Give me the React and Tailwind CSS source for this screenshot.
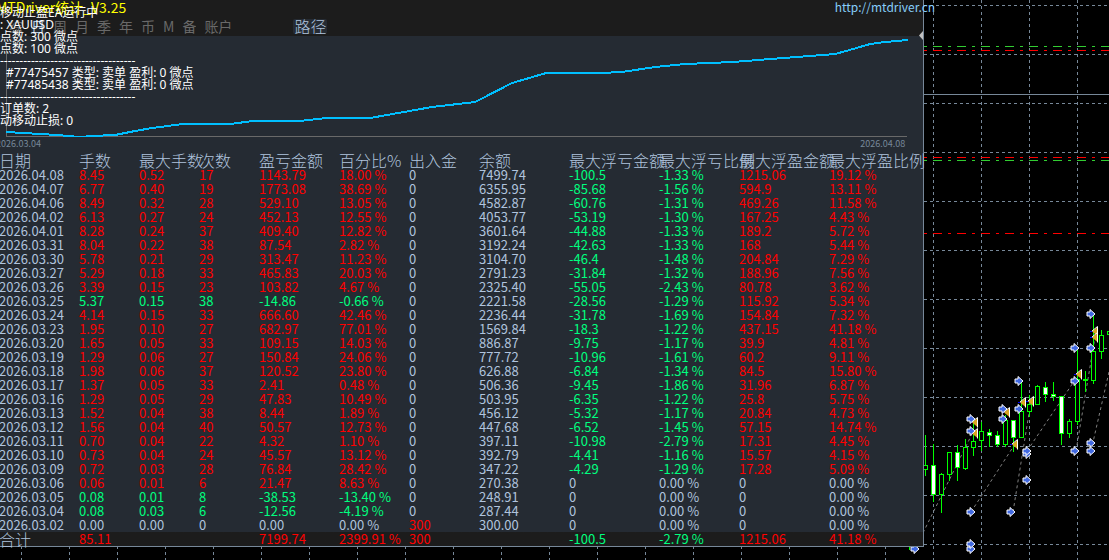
const COLUMNS = [
  { label: '日期', width: 'w-[80px]' },
  { label: '手数', width: 'w-[60px]' },
  { label: '最大手数', width: 'w-[60px]' },
  { label: '次数', width: 'w-[60px]' },
  { label: '盈亏金额', width: 'w-[80px]' },
  { label: '百分比%', width: 'w-[70px]' },
  { label: '出入金', width: 'w-[70px]' },
  { label: '余额', width: 'w-[90px]' },
  { label: '最大浮亏金额', width: 'w-[90px]' },
  { label: '最大浮亏比例', width: 'w-[80px]' },
  { label: '最大浮盈金额', width: 'w-[90px]' },
  { label: '最大浮盈比例', width: '' },
];

// date, lots, max lots, trades, profit, profit %, deposit, balance, max dd, max dd %, max float, max float %
const ROWS = [
  ['2026.04.08', '8.45', '0.52', '17', '1143.79', '18.00', '0', '7499.74', '-100.5', '-1.33', '1215.06', '19.12'],
  ['2026.04.07', '6.77', '0.40', '19', '1773.08', '38.69', '0', '6355.95', '-85.68', '-1.56', '594.9', '13.11'],
  ['2026.04.06', '8.49', '0.32', '28', '529.10', '13.05', '0', '4582.87', '-60.76', '-1.31', '469.26', '11.58'],
  ['2026.04.02', '6.13', '0.27', '24', '452.13', '12.55', '0', '4053.77', '-53.19', '-1.30', '167.25', '4.43'],
  ['2026.04.01', '8.28', '0.24', '37', '409.40', '12.82', '0', '3601.64', '-44.88', '-1.33', '189.2', '5.72'],
  ['2026.03.31', '8.04', '0.22', '38', '87.54', '2.82', '0', '3192.24', '-42.63', '-1.33', '168', '5.44'],
  ['2026.03.30', '5.78', '0.21', '29', '313.47', '11.23', '0', '3104.70', '-46.4', '-1.48', '204.84', '7.29'],
  ['2026.03.27', '5.29', '0.18', '33', '465.83', '20.03', '0', '2791.23', '-31.84', '-1.32', '188.96', '7.56'],
  ['2026.03.26', '3.39', '0.15', '23', '103.82', '4.67', '0', '2325.40', '-55.05', '-2.43', '80.78', '3.62'],
  ['2026.03.25', '5.37', '0.15', '38', '-14.86', '-0.66', '0', '2221.58', '-28.56', '-1.29', '115.92', '5.34'],
  ['2026.03.24', '4.14', '0.15', '33', '666.60', '42.46', '0', '2236.44', '-31.78', '-1.69', '154.84', '7.32'],
  ['2026.03.23', '1.95', '0.10', '27', '682.97', '77.01', '0', '1569.84', '-18.3', '-1.22', '437.15', '41.18'],
  ['2026.03.20', '1.65', '0.05', '33', '109.15', '14.03', '0', '886.87', '-9.75', '-1.17', '39.9', '4.81'],
  ['2026.03.19', '1.29', '0.06', '27', '150.84', '24.06', '0', '777.72', '-10.96', '-1.61', '60.2', '9.11'],
  ['2026.03.18', '1.98', '0.06', '37', '120.52', '23.80', '0', '626.88', '-6.84', '-1.34', '84.5', '15.80'],
  ['2026.03.17', '1.37', '0.05', '33', '2.41', '0.48', '0', '506.36', '-9.45', '-1.86', '31.96', '6.87'],
  ['2026.03.16', '1.29', '0.05', '29', '47.83', '10.49', '0', '503.95', '-6.35', '-1.22', '25.8', '5.75'],
  ['2026.03.13', '1.52', '0.04', '38', '8.44', '1.89', '0', '456.12', '-5.32', '-1.17', '20.84', '4.73'],
  ['2026.03.12', '1.56', '0.04', '40', '50.57', '12.73', '0', '447.68', '-6.52', '-1.45', '57.15', '14.74'],
  ['2026.03.11', '0.70', '0.04', '22', '4.32', '1.10', '0', '397.11', '-10.98', '-2.79', '17.31', '4.45'],
  ['2026.03.10', '0.73', '0.04', '24', '45.57', '13.12', '0', '392.79', '-4.41', '-1.16', '15.57', '4.15'],
  ['2026.03.09', '0.72', '0.03', '28', '76.84', '28.42', '0', '347.22', '-4.29', '-1.29', '17.28', '5.09'],
  ['2026.03.06', '0.06', '0.01', '6', '21.47', '8.63', '0', '270.38', '0', '0.00', '0', '0.00'],
  ['2026.03.05', '0.08', '0.01', '8', '-38.53', '-13.40', '0', '248.91', '0', '0.00', '0', '0.00'],
  ['2026.03.04', '0.08', '0.03', '6', '-12.56', '-4.19', '0', '287.44', '0', '0.00', '0', '0.00'],
  ['2026.03.02', '0.00', '0.00', '0', '0.00', '0.00', '300', '300.00', '0', '0.00', '0', '0.00'],
];

const TOTAL = ['合计', '85.11', '', '', '7199.74', '2399.91', '300', '', '-100.5', '-2.79', '1215.06', '41.18'];

const PERCENT_COLS = [5, 9, 11];
const PROFIT_COLS = [1, 2, 3, 4, 5];

const PERIODS = ['综', '日', '周', '月', '季', '年', '币', 'M', '备', '账户'];

const EQUITY = '6,96 24,97 40,98 57,99 80,101 92,100 115,99 135,95 152,92 183,88 230,88 253,85 300,85 326,82 370,82 432,71 475,66 512,47 546,37 600,37 622,36 655,31 685,28 733,26 783,22 835,18 853,13 870,8 885,6 908,4';

// x, high, low, body top, body bottom, kind
const CANDLES = [
  [925, 435, 475, 465, 469, 'up'],
  [933, 444, 501, 465, 494, 'down'],
  [941, 473, 512, 474, 494, 'up'],
  [949, 452, 480, 452, 474, 'up'],
  [957, 445, 480, 452, 467, 'down'],
  [965, 439, 469, 447, 468, 'up'],
  [973, 420, 455, 441, 447, 'up'],
  [981, 422, 450, 431, 440, 'up'],
  [989, 429, 446, 432, 435, 'down'],
  [997, 431, 446, 435, 444, 'down'],
  [1005, 415, 446, 420, 444, 'up'],
  [1013, 420, 451, 420, 437, 'down'],
  [1021, 382, 437, 411, 437, 'up'],
  [1029, 395, 416, 404, 411, 'up'],
  [1037, 385, 404, 386, 404, 'up'],
  [1045, 382, 401, 387, 394, 'down'],
  [1053, 382, 400, 394, 396, 'down'],
  [1061, 396, 444, 396, 433, 'down'],
  [1069, 419, 437, 421, 433, 'up'],
  [1077, 350, 424, 379, 421, 'up'],
  [1085, 371, 391, 379, 380, 'up'],
  [1093, 313, 383, 351, 380, 'up'],
  [1101, 330, 358, 335, 351, 'up'],
  [1109, 331, 334, 331, 334, 'up'],
];

const ENTRIES = [
  [1091, 314], [1075, 348], [1091, 348], [1019, 381], [1075, 381], [1003, 409], [1019, 409],
  [1003, 419], [971, 419], [971, 431], [1027, 454], [1027, 451], [1027, 480], [971, 512],
  [1011, 512], [971, 549], [971, 544], [915, 549], [1075, 451], [1091, 443], [1091, 451],
];

const EXITS = [
  [1095, 331], [1095, 337], [1079, 374], [1023, 402], [1031, 401], [1007, 412],
  [975, 422], [975, 433], [1015, 444],
];

const TRENDS = [
  [915, 549, 973, 432], [971, 512, 1015, 444], [1013, 512, 1031, 401],
  [1027, 451, 1079, 374], [1076, 451, 1095, 337], [1091, 451, 1109, 372],
];

const LEVELS = [
  { y: 46, color: '#32cd32' },
  { y: 50, color: '#ff0000' },
  { y: 157, color: '#ff0000' },
  { y: 160, color: '#32cd32' },
  { y: 233, color: '#ff0000' },
];

const GRID_X = Array.from({ length: 23 }, (_, i) => 21 + i * 48);
const GRID_Y = Array.from({ length: 12 }, (_, i) => 5 + i * 49);

function cellColor(row, i) {
  if (i === 0 || i === 7) return 'text-[#b0c4de]';
  const value = Number(PROFIT_COLS.includes(i) ? row[4] : row[i]);
  if (value > 0) return 'text-[#ff0000]';
  if (value < 0) return 'text-[#00ff7f]';
  return 'text-[#b0c4de]';
}

function cellText(row, i) {
  return PERCENT_COLS.includes(i) ? `${row[i]} %` : row[i];
}

function PriceChart() {
  return (
    <svg className="absolute inset-0 w-full h-full" viewBox="0 0 1109 560" preserveAspectRatio="xMinYMin slice" aria-hidden="true">
      <g stroke="#778899" strokeDasharray="3 3" shapeRendering="crispEdges">
        {GRID_X.map(x => <line key={x} x1={x + 0.5} x2={x + 0.5} y1="0" y2="560" />)}
        {GRID_Y.map(y => <line key={y} x1="0" x2="1109" y1={y + 0.5} y2={y + 0.5} />)}
      </g>
      <line x1="0" x2="1109" y1="94.5" y2="94.5" stroke="#778899" shapeRendering="crispEdges" />
      {LEVELS.map(l => (
        <line key={l.y} x1="909" x2="1109" y1={l.y + 0.5} y2={l.y + 0.5} stroke={l.color} strokeDasharray="9 6 3 6" shapeRendering="crispEdges" />
      ))}
      <g stroke="#808080" strokeDasharray="3 3">
        {TRENDS.map(([x1, y1, x2, y2]) => <line key={`${x1}-${y1}`} x1={x1} y1={y1} x2={x2} y2={y2} />)}
      </g>
      <g shapeRendering="crispEdges" stroke="#00ff00">
        {CANDLES.map(([x, high, low, top, bottom, kind]) => (
          <g key={x}>
            <line x1={x + 0.5} x2={x + 0.5} y1={high} y2={low + 1} />
            <rect x={x - 1.5} y={top + 0.5} width="4" height={bottom - top} fill={kind === 'up' ? '#000000' : '#ffffff'} />
          </g>
        ))}
        <line x1="909.5" x2="909.5" y1="546" y2="550" />
      </g>
      {EXITS.map(([x, y]) => (
        <g key={`${x}-${y}`} transform={`translate(${x} ${y})`}>
          <path d="M-5 0.5H-2" stroke="#0000ff" />
          <path d="M-3 0.5L2.5 -4V5Z" fill="#daa520" />
          <path d="M-3 0L2.5 -4.5V5.5" fill="none" stroke="#ffffff" />
        </g>
      ))}
      {ENTRIES.map(([x, y]) => (
        <path
          key={`${x}-${y}`}
          transform={`translate(${x} ${y})`}
          d="M-4 -2H-1V-4.500L4 0L-1 4.500V2H-4Z"
          fill="#4169e1"
          stroke="#ffffff"
        />
      ))}
    </svg>
  );
}

function EquityChart() {
  return (
    <div>
      <svg className="block w-full h-[101px]" viewBox="0 0 923 101" preserveAspectRatio="none" role="img" aria-label="余额曲线">
        <path d="M6.5 10V100.5H907" fill="none" stroke="#696969" shapeRendering="crispEdges" />
        <polyline points={EQUITY} fill="none" stroke="#00bfff" strokeWidth="2" shapeRendering="crispEdges" />
      </svg>
      <div className="flex justify-between h-[15px] pr-[18px] text-[9px] leading-[14px] text-[#778899]">
        <span className="-ml-1">2026.03.04</span>
        <span>2026.04.08</span>
      </div>
    </div>
  );
}

function StatsTable() {
  return (
    <div className="bg-linear-to-t from-[#1c1c1c] from-[14px] to-transparent to-[14px]">
      <table className="-ml-px w-full table-fixed border-collapse text-[13px] leading-[14px] whitespace-nowrap">
        <thead>
          <tr className="text-base leading-[16px] text-[#b0c4de]">
            {COLUMNS.map(col => (
              <th key={col.label} className={`${col.width} p-0 text-left font-light`}>{col.label}</th>
            ))}
          </tr>
        </thead>
        <tbody>
          {ROWS.map(row => (
            <tr key={row[0]}>
              {row.map((_, i) => (
                <td key={i} className={`h-[14px] p-0 ${cellColor(row, i)}`}>{cellText(row, i)}</td>
              ))}
            </tr>
          ))}
        </tbody>
        <tfoot>
          <tr>
            {TOTAL.map((value, i) => (
              <td key={i} className={`h-[14px] p-0 ${cellColor(TOTAL, i)} ${i === 0 ? 'text-base leading-[14px] font-light' : ''}`}>
                {value && cellText(TOTAL, i)}
              </td>
            ))}
          </tr>
        </tfoot>
      </table>
    </div>
  );
}

function ExpertComment() {
  return (
    <div className="absolute left-0 top-[7px] text-xs leading-[12px] text-white whitespace-pre font-normal font-['Noto_Sans','Noto_Sans_CJK_SC',sans-serif]">
      <p>移动止盈EA运行中</p>
      <p>: XAUUSD</p>
      <p>点数: 300 微点</p>
      <p>点数: 100 微点</p>
      <p>-----------------------------------</p>
      <p className="pl-1.5">#77475457 类型: 卖单 盈利: 0 微点</p>
      <p className="pl-1.5">#77485438 类型: 卖单 盈利: 0 微点</p>
      <p>-----------------------------------</p>
      <p>订单数: 2</p>
      <p>动移动止损: 0</p>
    </div>
  );
}

export default function App() {
  return (
    <div className="relative min-h-screen overflow-hidden bg-black font-normal font-['Noto_Sans_CJK_SC',sans-serif]">
      <PriceChart />
      <main className="relative w-5/6 bg-[#252b33] border-r border-b border-[#778899]">
        <header className="relative h-9 bg-[#1c1c1c]">
          <div className="flex justify-between h-[19px]">
            <h1 className="-ml-1 text-sm leading-[14px] font-normal text-[#ffff00]">MTDriver统计_V3.25</h1>
            <a href="http://mtdriver.cn" className="-mr-3 text-xs leading-[14px] text-[#87cefa]">http://mtdriver.cn</a>
          </div>
          <nav className="flex items-center pl-[9px] text-sm text-[#696969]">
            {PERIODS.map(p => (
              <button
                key={p}
                type="button"
                className={`flex h-[14px] items-end overflow-hidden mr-2 leading-[16px] ${p === '日' ? 'bg-[#252b33] text-[#b0c4de]' : ''}`}
              >
                {p}
              </button>
            ))}
            <button type="button" className="flex h-[15px] items-end overflow-hidden ml-[53px] rounded-xs bg-[#252b33] px-px text-base leading-[16px] font-light text-[#b0c4de]">
              路径
            </button>
          </nav>
          <svg className="absolute right-0 bottom-[-5px] w-1 h-2.5" viewBox="0 0 4 10" aria-hidden="true">
            <path d="M4 0V9L0 4.500Z" fill="#c0c0c0" />
          </svg>
        </header>
        <EquityChart />
        <StatsTable />
        <ExpertComment />
      </main>
    </div>
  );
}
